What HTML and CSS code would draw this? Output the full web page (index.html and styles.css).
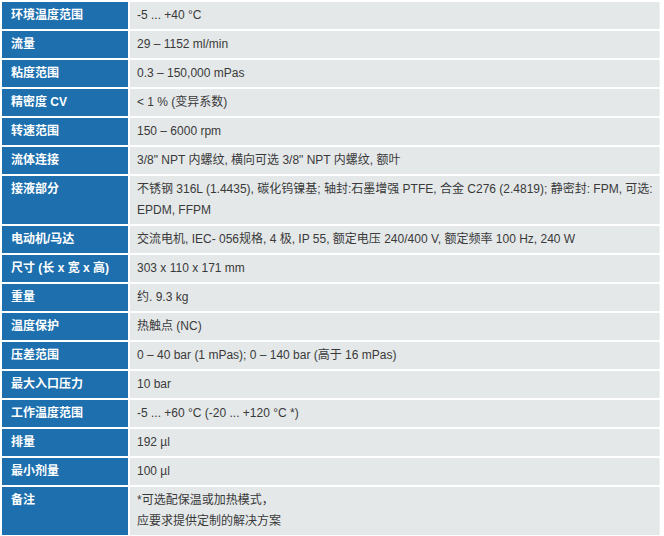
FILE: index.html
```html
<!DOCTYPE html>
<html lang="zh">
<head>
<meta charset="utf-8">
<link rel="stylesheet" href="styles.css">
</head>
<body>
<table class="spec">
<tbody>
<tr><th>环境温度范围</th><td>-5 ... +40 °C</td></tr>
<tr><th>流量</th><td>29 – 1152 ml/min</td></tr>
<tr><th>粘度范围</th><td>0.3 – 150,000 mPas</td></tr>
<tr><th>精密度 CV</th><td>&lt; 1 % (变异系数)</td></tr>
<tr><th>转速范围</th><td>150 – 6000 rpm</td></tr>
<tr><th>流体连接</th><td>3/8" NPT 内螺纹, 横向可选 3/8" NPT 内螺纹, 额叶</td></tr>
<tr><th>接液部分</th><td>不锈钢 316L (1.4435), 碳化钨镍基; 轴封:石墨增强 PTFE, 合金 C276 (2.4819); 静密封: FPM, 可选: EPDM, FFPM</td></tr>
<tr><th>电动机/马达</th><td>交流电机, IEC- 056规格, 4 极, IP 55, 额定电压 240/400 V, 额定频率 100 Hz, 240 W</td></tr>
<tr><th>尺寸 (长 x 宽 x 高)</th><td>303 x 110 x 171 mm</td></tr>
<tr><th>重量</th><td>约. 9.3 kg</td></tr>
<tr><th>温度保护</th><td>热触点 (NC)</td></tr>
<tr><th>压差范围</th><td>0 – 40 bar (1 mPas); 0 – 140 bar (高于 16 mPas)</td></tr>
<tr><th>最大入口压力</th><td>10 bar</td></tr>
<tr><th>工作温度范围</th><td>-5 ... +60 °C (-20 ... +120 °C *)</td></tr>
<tr><th>排量</th><td>192 µl</td></tr>
<tr><th>最小剂量</th><td>100 µl</td></tr>
<tr><th>备注</th><td>*可选配保温或加热模式，<br>应要求提供定制的解决方案</td></tr>
</tbody>
</table>
</body>
</html>
```
FILE: styles.css
```css
html, body {
  margin: 0;
  padding: 0;
  background: #ffffff;
}
.spec {
  width: 662px;
  border-collapse: separate;
  border-spacing: 2px;
  font-family: "Liberation Sans", Arial, "Noto Sans CJK SC", sans-serif;
  font-size: 12px;
  line-height: 21px;
}
.spec th {
  width: 117px;
  background: #1d6fae;
  color: #ffffff;
  font-weight: bold;
  text-align: left;
  vertical-align: top;
  padding: 3px 0 3px 9px;
}
.spec td {
  background: #e4e8e9;
  color: #3a3a3a;
  text-align: left;
  vertical-align: top;
  padding: 3px 0 3px 7px;
  border-right: 1px solid #eef0f1;
}
```
